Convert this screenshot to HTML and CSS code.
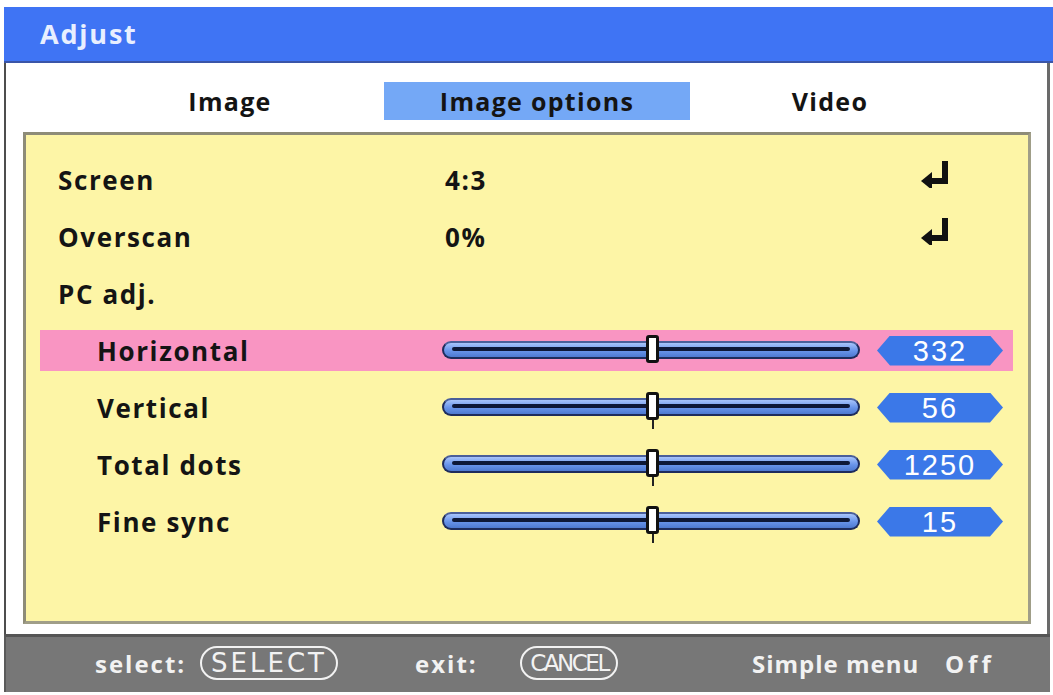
FILE: index.html
```html
<!DOCTYPE html>
<html>
<head>
<meta charset="utf-8">
<link rel="stylesheet" href="styles.css">
</head>
<body>
<div class="window">
  <div class="titlebar">Adjust</div>
  <div class="body">
    <div class="tabs">
      <div class="tab t1">Image</div>
      <div class="tab t2 active">Image options</div>
      <div class="tab t3">Video</div>
    </div>
    <div class="panel">
      <div class="row">
        <div class="label">Screen</div>
        <div class="val">4:3</div>
        <svg class="enter" viewBox="0 0 30 28" width="30" height="28"><path d="M25 1 V21 H11" fill="none" stroke="#111" stroke-width="6"/><path d="M1 21 L12 12 L12 30 Z" fill="#111"/></svg>
      </div>
      <div class="row">
        <div class="label">Overscan</div>
        <div class="val">0%</div>
        <svg class="enter" viewBox="0 0 30 28" width="30" height="28"><path d="M25 1 V21 H11" fill="none" stroke="#111" stroke-width="6"/><path d="M1 21 L12 12 L12 30 Z" fill="#111"/></svg>
      </div>
      <div class="row">
        <div class="label">PC adj.</div>
      </div>
      <div class="row sub selected">
        <div class="label">Horizontal</div>
        <div class="slider"><div class="knob"></div></div>
        <div class="num">332</div>
      </div>
      <div class="row sub">
        <div class="label">Vertical</div>
        <div class="slider"><div class="knob tick"></div></div>
        <div class="num">56</div>
      </div>
      <div class="row sub">
        <div class="label">Total dots</div>
        <div class="slider"><div class="knob tick"></div></div>
        <div class="num">1250</div>
      </div>
      <div class="row sub">
        <div class="label">Fine sync</div>
        <div class="slider"><div class="knob tick"></div></div>
        <div class="num">15</div>
      </div>
    </div>
  </div>
  <div class="footer">
    <span class="hint h1">select:</span>
    <span class="pill select">SELECT</span>
    <span class="hint h2">exit:</span>
    <span class="pill cancel">CANCEL</span>
    <span class="hint h3">Simple menu</span>
    <span class="hint h4">Off</span>
  </div>
</div>
</body>
</html>
```

FILE: styles.css
```css
* { box-sizing: border-box; }
html, body { margin: 0; padding: 0; background: #ffffff; }
body {
  font-family: "Open Sans", "DejaVu Sans", sans-serif;
  font-weight: 700;
  color: #141414;
}
.window {
  margin: 7px 0 0 4px;
  width: 1046px;
}
.titlebar {
  width: 1049px;
  height: 56px;
  background: #3f74f4;
  color: #e8efff;
  font-size: 27px;
  letter-spacing: 1.8px;
  line-height: 54px;
  padding-left: 36px;
  border-bottom: 2px solid #3a55a8;
}
.body {
  background: #ffffff;
  border-left: 2px solid #4e4e4e;
  border-right: 3px solid #6a6a6a;
  padding: 19px 16px 10px 17px;
}
.tabs {
  display: grid;
  grid-template-columns: 308px 306px 280px;
  padding-left: 53px;
  height: 38px;
}
.tab {
  font-size: 25px;
  letter-spacing: 1.3px;
  line-height: 38px;
  text-align: center;
}
.tab.active { background: #74a8f6; }
.panel {
  margin-top: 12px;
  height: 492px;
  background: #fdf5a6;
  border: 3px solid #8e8c78;
  border-right-color: #a09e88;
  border-bottom-color: #a09e88;
  padding: 24px 15px 0 14px;
  display: flex;
  flex-direction: column;
  gap: 16px;
}
.row {
  display: flex;
  align-items: center;
  height: 41px;
  font-size: 26px;
  letter-spacing: 1.6px;
}
.row .label {
  width: 405px;
  padding-left: 18px;
}
.row.sub .label {
  width: 402px;
  padding-left: 57px;
}
.row.selected { background: #f995c2; }
.val { width: 475px; }
.enter { display: block; margin-top: -12px; }
.slider {
  position: relative;
  width: 418px;
  height: 18px;
  border-radius: 9px;
  background: linear-gradient(#a7c4fb, #6894ea 55%, #4d79d0);
  border: 2px solid #1e2c5c;
  border-top-color: #4a5f9a;
  margin-top: -2px;
}
.slider::before {
  content: "";
  position: absolute;
  left: 8px;
  right: 8px;
  top: 4px;
  height: 4px;
  border-radius: 2px;
  background: #0d1838;
}
.knob {
  position: absolute;
  left: 202px;
  top: -8px;
  width: 13px;
  height: 28px;
  background: #ffffff;
  border: 3px solid #111;
  border-radius: 3px;
}
.knob.tick::after {
  content: "";
  position: absolute;
  left: 3px;
  top: 25px;
  width: 2px;
  height: 9px;
  background: #222;
}
.num {
  margin-left: 17px;
  width: 126px;
  height: 30px;
  background: #3b78e8;
  clip-path: polygon(13px 0, 113px 0, 126px 50%, 113px 100%, 13px 100%, 0 50%);
  color: #ffffff;
  font-family: "Liberation Sans", sans-serif;
  font-weight: 400;
  font-size: 29px;
  letter-spacing: 2px;
  line-height: 30px;
  text-align: center;
}
.footer {
  height: 58px;
  background: #777777;
  border-top: 3px solid #555555;
  border-left: 2px solid #5a5a5a;
  display: flex;
  align-items: center;
  padding-bottom: 3px;
  color: #f2f2f2;
  font-size: 24px;
  letter-spacing: 2px;
}
.hint { white-space: nowrap; }
.h1 { margin-left: 89px; width: 105px; }
.pill {
  border: 2px solid #f2f2f2;
  border-radius: 17px;
  height: 34px;
  line-height: 30px;
  text-align: center;
  font-weight: 400;
  font-family: "DejaVu Sans", sans-serif;
}
.select {
  width: 138px;
  font-size: 26px;
  letter-spacing: 3px;
}
.h2 { margin-left: 77px; width: 105px; }
.cancel {
  width: 98px;
  font-size: 23px;
  letter-spacing: -2.5px;
}
.h3 { margin-left: 134px; width: 193px; letter-spacing: 1px; }
.h4 { letter-spacing: 4px; }
```
